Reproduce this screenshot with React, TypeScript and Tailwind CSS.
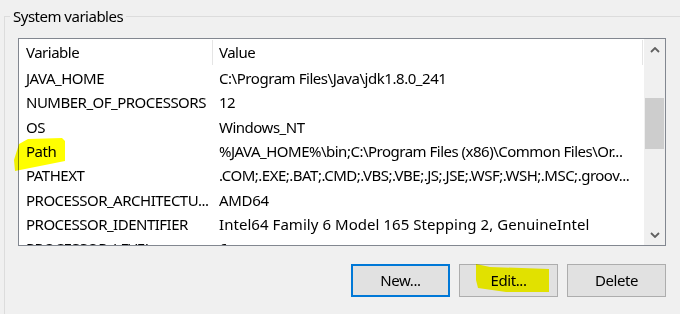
type Row = { name: string; value: string; valueClass: string }

const rows: Row[] = [
  { name: 'JAVA_HOME', value: 'C:\\Program Files\\Java\\jdk1.8.0_241', valueClass: 'tracking-[-0.45px]' },
  { name: 'NUMBER_OF_PROCESSORS', value: '12', valueClass: 'tracking-[-0.5px]' },
  { name: 'OS', value: 'Windows_NT', valueClass: 'tracking-[-0.5px]' },
  { name: 'Path', value: '%JAVA_HOME%\\bin;C:\\Program Files (x86)\\Common Files\\Or...', valueClass: 'tracking-[-0.5px]' },
  { name: 'PATHEXT', value: '.COM;.EXE;.BAT;.CMD;.VBS;.VBE;.JS;.JSE;.WSF;.WSH;.MSC;.groov...', valueClass: 'tracking-[-0.5px]' },
  { name: 'PROCESSOR_ARCHITECTU...', value: 'AMD64', valueClass: 'tracking-[-0.3px]' },
  { name: 'PROCESSOR_IDENTIFIER', value: 'Intel64 Family 6 Model 165 Stepping 2, GenuineIntel', valueClass: 'tracking-[0.05px]' },
  { name: 'PROCESSOR_LEVEL', value: '6', valueClass: 'tracking-[-0.5px]' },
]

function Chevron({ down }: { down?: boolean }) {
  return (
    <svg width="10" height="6" viewBox="0 0 10 6" className="shrink-0">
      <path
        d={down ? 'M1 1 L5 5 L9 1' : 'M1 5 L5 1 L9 5'}
        fill="none"
        stroke="#606060"
        strokeWidth="1.8"
      />
    </svg>
  )
}

function Button({ label, focused }: { label: string; focused?: boolean }) {
  return (
    <button
      className={
        focused
          ? 'w-[99px] h-[33px] bg-[#e1e1e1] border-2 border-[#0078d7] text-[15px] tracking-[-0.4px] text-black'
          : 'w-[99px] h-[33px] bg-[#e1e1e1] border border-[#adadad] text-[15px] tracking-[-0.4px] text-black'
      }
    >
      {label}
    </button>
  )
}

export default function App() {
  return (
    <div
      className="relative w-[680px] h-[314px] overflow-hidden bg-[#f0f0f0] text-black"
      style={{ fontFamily: '"Noto Sans", "Open Sans", sans-serif' }}
    >
      <div className="relative ml-[4px] mt-[16px] h-[298px] border-l border-t border-[#dcdcdc] pl-[13px] pt-[21px]">
        <span className="absolute left-[5px] -top-[11px] px-[3px] bg-[#f0f0f0] text-[15px] leading-[20px] tracking-[-0.5px]">
          System variables
        </span>

        <div className="flex w-[648px] h-[208px] border border-[#828790] bg-white">
          <div className="flex-1 flex flex-col overflow-hidden text-[15px]">
            <div className="flex items-center h-[27px] shrink-0 tracking-[-0.5px]">
              <div className="w-[193px] pl-[7px]">Variable</div>
              <div className="w-px h-[25px] bg-[#e5e5e5]" />
              <div className="w-[429px] pl-[6px]">Value</div>
              <div className="w-px h-[25px] bg-[#e5e5e5]" />
            </div>
            {rows.map(row => (
              <div key={row.name} className="flex items-center h-[24.33px] shrink-0 whitespace-nowrap">
                <div className="w-[194px] pl-[7px] overflow-hidden tracking-[-0.5px]">{row.name}</div>
                <div className={`w-[430px] pl-[6px] overflow-hidden ${row.valueClass}`}>{row.value}</div>
              </div>
            ))}
          </div>
          <div className="w-[21px] flex flex-col items-center bg-[#f0f0f0]">
            <div className="h-[21px] flex items-center justify-center w-full">
              <Chevron />
            </div>
            <div className="flex-1 w-full px-[1px]">
              <div className="mt-[38px] h-[51px] bg-[#cdcdcd]" />
            </div>
            <div className="h-[21px] flex items-center justify-center w-full">
              <Chevron down />
            </div>
          </div>
        </div>

        <div className="flex justify-end gap-[9px] w-[648px] mt-[18px]">
          <Button label="New..." focused />
          <Button label="Edit..." />
          <Button label="Delete" />
        </div>
      </div>

      {/* highlighter marks drawn over the screenshot */}
      <svg
        className="absolute inset-0 pointer-events-none mix-blend-multiply"
        width="680"
        height="314"
        viewBox="0 0 680 314"
      >
        <polygon
          points="19,144 28,139 62,138 65,141 65,161 40,166 15,171 14,160"
          fill="#ffff00"
        />
        <polygon
          points="476,264 490,267 549,269 549,292 506,292 478,288 476,280"
          fill="#ffff00"
        />
      </svg>
    </div>
  )
}
